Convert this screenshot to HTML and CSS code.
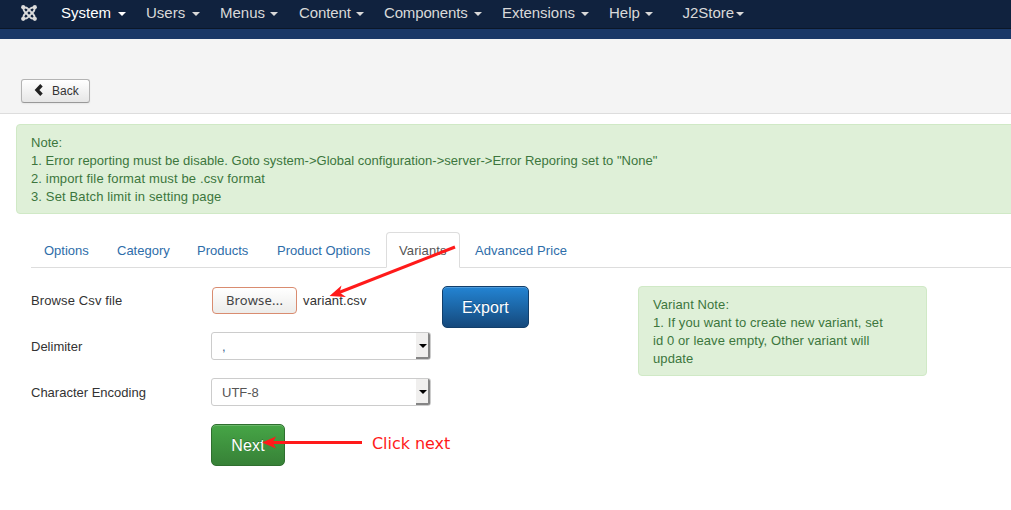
FILE: index.html
```html
<!DOCTYPE html>
<html lang="en">
<head>
<meta charset="utf-8">
<title>Import variants</title>
<link rel="stylesheet" href="styles.css">
</head>
<body>
<nav class="navbar">
  <svg class="logo" viewBox="0 0 16 16" width="16" height="16" fill="none" stroke="#dcdcdc">
    <g stroke-width="1.9">
      <path d="M2.7 2.7Q2 5.2 3.7 6.8L9.8 12.9"/>
      <path d="M13.3 2.7Q10.8 2 9.2 3.7L3.1 9.8"/>
      <path d="M13.3 13.3Q14 10.8 12.3 9.2L6.2 3.1"/>
      <path d="M2.7 13.3Q5.2 14 6.8 12.3L12.9 6.2"/>
      <path d="M2.7 2.7Q5 2 6.5 3.4M13.3 2.7Q14 5 12.6 6.5M13.3 13.3Q11 14 9.5 12.6M2.7 13.3Q2 11 3.4 9.5"/>
    </g>
    <g fill="#dcdcdc" stroke="none"><circle cx="2.2" cy="2.2" r="2.1"/><circle cx="13.8" cy="2.2" r="2.1"/><circle cx="2.2" cy="13.8" r="2.1"/><circle cx="13.8" cy="13.8" r="2.1"/></g>
  </svg>
  <ul class="menu">
    <li class="system active">System<i class="caret"></i></li>
    <li class="users">Users<i class="caret"></i></li>
    <li class="menus">Menus<i class="caret"></i></li>
    <li class="content">Content<i class="caret"></i></li>
    <li class="components">Components<i class="caret"></i></li>
    <li class="extensions">Extensions<i class="caret"></i></li>
    <li class="help">Help<i class="caret"></i></li>
    <li class="store">J2Store<i class="caret"></i></li>
  </ul>
</nav>
<div class="header"></div>
<div class="toolbar">
  <button class="back"><svg width="10" height="12" viewBox="0 0 10 12"><path d="M7.5 1.3 3 6 7.5 10.7" fill="none" stroke="#222" stroke-width="3.4"/></svg><span>Back</span></button>
</div>
<main>
  <div class="alert note">Note:<br>1. Error reporting must be disable. Goto system-&gt;Global configuration-&gt;server-&gt;Error Reporing set to "None"<br><span class="wide">2. import file format must be .csv format<br>3. Set Batch limit in setting page</span></div>
  <ul class="tabs">
    <li class="t-options">Options</li>
    <li class="t-category">Category</li>
    <li class="t-products">Products</li>
    <li class="t-poptions">Product Options</li>
    <li class="t-variants selected">Variants</li>
    <li class="t-price">Advanced Price</li>
  </ul>
  <div class="panel">
    <form class="fields">
      <div class="row"><label class="file-label">Browse Csv file</label><button type="button" class="browse">Browse...</button><span class="filename">variant.csv</span></div>
      <div class="row"><label>Delimiter</label><div class="select"><span class="comma">,</span><b class="arrow"></b></div></div>
      <div class="row"><label>Character Encoding</label><div class="select"><span>UTF-8</span><b class="arrow"></b></div></div>
      <div class="row action"><button type="button" class="btn next">Next</button></div>
    </form>
    <button class="btn export">Export</button>
    <div class="alert variant">Variant Note:<br>1. If you want to create new variant, set<br>id 0 or leave empty, Other variant will<br>update</div>
  </div>
</main>
<svg class="annotation" width="1011" height="510" viewBox="0 0 1011 510">
  <g stroke="#ff1a1a" stroke-width="3">
    <path d="M455 247 339 292.5"/>
    <path d="M362 442.5H272"/>
  </g>
  <g fill="#ff1a1a">
    <path d="M329.5 296 341.5 285.5 339.5 292.5 346 297Z"/>
    <path d="M262 442.5 276 436.5 272.5 442.5 276 448.5Z"/>
  </g>
</svg>
<span class="hint">Click next</span>
</body>
</html>
```
FILE: styles.css
```css
* { box-sizing: border-box; }
body { margin: 0; width: 1011px; height: 510px; overflow: hidden; background: #fff; color: #333; font: 13px/18px "Liberation Sans", Arial, sans-serif; }
ul { list-style: none; margin: 0; padding: 0; }
button { font-family: inherit; }
.navbar { display: flex; align-items: flex-start; height: 29px; background: #10223e; border-bottom: 1px solid #0b1728; padding-left: 21px; }
.logo { margin-top: 5px; flex: none; }
.menu { display: flex; margin-left: 24px; color: #d9d9d9; font-size: 15px; line-height: 20px; padding-top: 3px; }
.menu li { display: flex; justify-content: space-between; align-items: center; margin-right: 21px; white-space: nowrap; }
.menu .active { color: #fff; }
.caret { width: 0; height: 0; border: 4px solid transparent; border-top-color: currentColor; border-bottom: 0; margin-top: 2px; }
.menu .system { width: 65px; margin-right: 20px; }
.menu .users { width: 54px; margin-right: 20px; }
.menu .menus { width: 58px; }
.menu .content { width: 65px; margin-right: 20px; letter-spacing: -.1px; }
.menu .components { width: 98px; margin-right: 20px; letter-spacing: -.15px; }
.menu .extensions { width: 87px; margin-right: 20px; letter-spacing: -.05px; }
.menu .help { width: 44px; margin-right: 29px; }
.menu .store { width: 61px; margin-left: .5px; }
.header { height: 10px; background: #1a3867; }
.toolbar { height: 75px; background: #f4f4f4; border-bottom: 1px solid #ddd; padding: 40px 0 0 21px; }
.back { display: flex; align-items: center; width: 69px; height: 24px; padding: 0 0 0 12px; border: 1px solid #b3b3b3; border-bottom-color: #999; border-radius: 3px; background: linear-gradient(#fff, #e6e6e6); box-shadow: 0 1px 2px rgba(0,0,0,.06); color: #333; font-size: 12px; line-height: 18px; }
.back svg { margin-top: -2px; }
.back span { margin-left: 8px; }
main { padding: 10px 0 0 16px; }
.alert { background: #dff0d8; border: 1px solid #d0e9c6; border-radius: 4px; color: #3c763d; padding: 9px 14px 7px; white-space: nowrap; }
.note { height: 90px; width: 1010px; letter-spacing: .01px; }
.wide { letter-spacing: .14px; }
.tabs { display: flex; margin: 18px 0 0 15px; height: 36px; border-bottom: 1px solid #ddd; color: #2e6da9; gap: 2px; }
.tabs li { height: 36px; padding: 9px 12px; border: 1px solid transparent; white-space: nowrap; }
.tabs .selected { color: #555; background: #fff; border-color: #ddd #ddd #fff; border-radius: 4px 4px 0 0; }
.t-options { width: 71px; }
.t-category { width: 78px; }
.t-products { width: 78px; }
.t-poptions { width: 120px; }
.tabs .t-variants { width: 74px; letter-spacing: .1px; }
.t-price { width: 118px; letter-spacing: .07px; }
.panel { display: flex; align-items: flex-start; padding: 18px 0 0 15px; }
.fields { width: 411px; }
.row { display: flex; align-items: center; height: 28px; margin-bottom: 18px; }
label { width: 180px; padding-top: 2px; }
.file-label { letter-spacing: .12px; }
.browse { width: 85px; height: 27px; margin-left: 1px; padding: 0; border: 1px solid #d98c70; border-radius: 4px; background: linear-gradient(#fff, #ececea); color: #444; font: 13px/18px "Noto Sans", sans-serif; letter-spacing: .2px; }
.filename { margin-left: 6px; padding-top: 2px; letter-spacing: .13px; }
.select { display: flex; justify-content: space-between; width: 220px; height: 28px; border: 1px solid #ccc; border-radius: 3px; color: #555; line-height: 27px; padding: 0 0 0 10px; }
.comma { color: #3d5f91; }
.arrow { width: 14px; height: 26px; background: #f0efee; border-right: 2px solid #858585; border-bottom: 2px solid #858585; border-radius: 0 2px 2px 0; display: flex; justify-content: center; align-items: center; }
.arrow::after { content: ""; border: 4px solid transparent; border-top: 4px solid #000; border-bottom: 0; margin: 2px 0 0 2px; }
.btn { height: 42px; padding: 2px 0 0; color: #fff; font-size: 16px; line-height: 22px; border-radius: 5px; text-shadow: 0 -1px 0 rgba(0,0,0,.25); box-shadow: inset 0 1px 0 rgba(255,255,255,.2); }
.row.action { height: 42px; padding-left: 180px; margin: 0; }
.next { width: 74px; background: linear-gradient(#46a546, #378137); border: 1px solid #2f6f2f; letter-spacing: .15px; }
.export { width: 87px; background: linear-gradient(#2384d3, #15497c); border: 1px solid #123f6b; letter-spacing: .1px; }
.variant { width: 289px; height: 90px; margin-left: 109px; letter-spacing: .09px; }
.annotation { position: absolute; left: 0; top: 0; pointer-events: none; }
.hint { position: absolute; left: 372px; top: 434px; color: #ff1a1a; font: 16px/20px "DejaVu Sans", sans-serif; letter-spacing: -.05px; white-space: nowrap; }
```
